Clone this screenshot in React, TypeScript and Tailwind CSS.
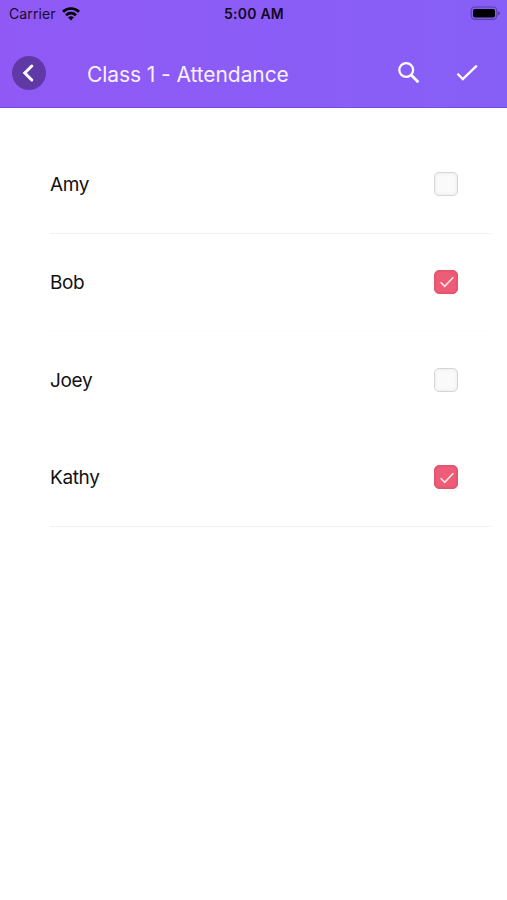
type Student = { name: string; present: boolean; line: string };

const students: Student[] = [
  { name: "Amy", present: false, line: "border-[#f3f3f3]" },
  { name: "Bob", present: true, line: "border-[#fcfcfc]" },
  { name: "Joey", present: false, line: "border-[#fdfdfd]" },
  { name: "Kathy", present: true, line: "border-[#f3f3f3]" },
];

function Label({ text, className }: { text: string; className: string }) {
  return <span className={`whitespace-nowrap ${className}`}>{text}</span>;
}

function StatusBar() {
  return (
    <div className="grid h-7 grid-cols-3 items-center pl-[7px] pr-[6px] text-black">
      <div className="flex items-center gap-[6px] pl-[2px]">
        <Label text="Carrier" className="text-[14px] leading-none tracking-[0.1px] text-[#170d2b]" />
        <svg className="h-[14px] w-[18px]" viewBox="0 0 18 14" fill="none" stroke="currentColor" strokeWidth="2.7">
          <path d="M1 4.7C5.4.4 12.6.4 17 4.7" />
          <path d="M4 8.2c2.8-2.7 7.2-2.7 10 0" />
          <path d="M6.1 10.3c1.6-1.4 4.2-1.4 5.8 0L9 13.4Z" fill="currentColor" stroke="none" />
        </svg>
      </div>
      <Label
        text="5:00 AM"
        className="text-center text-[14px] font-semibold leading-none tracking-[0.25px] text-[#12091f]"
      />
      <svg className="h-4 w-[31px] justify-self-end" viewBox="0 0 31 16">
        <rect x="1.2" y="1" width="25.6" height="12.4" rx="3.6" fill="none" stroke="#5a3fa6" strokeWidth="1.1" />
        <rect x="3" y="3" width="22" height="8.6" rx="1.8" fill="#000" />
        <path d="M28.2 5c2 .9 2 3.5 0 4.4Z" fill="#4c348c" />
      </svg>
    </div>
  );
}

function NavBar() {
  return (
    <div className="flex h-[79px] items-center pl-3 pr-7 pt-[11px] text-white">
      <button aria-label="Back" className="rounded-full bg-[#6039a7]">
        <svg className="size-[34px]" viewBox="0 0 34 34" fill="none" stroke="currentColor" strokeWidth="3">
          <path d="M19.8 10 12.8 17l7 7" strokeLinecap="round" />
        </svg>
      </button>
      <h1 className="ml-[41px] mt-[3px] flex-1 whitespace-nowrap text-[21px] font-normal leading-6 tracking-[-0.08px] text-[#f8f0ff]">
        Class 1 - Attendance
      </h1>
      <button aria-label="Search">
        <svg className="size-[24px]" viewBox="0 0 24 24" fill="none" stroke="currentColor" strokeWidth="2.2">
          <circle cx="9.2" cy="9" r="6.9" />
          <path d="m14.2 14 7.2 7.2" strokeWidth="2.8" />
        </svg>
      </button>
      <button aria-label="Save" className="ml-[34px]">
        <svg className="size-[24px]" viewBox="0 0 24 24" fill="none" stroke="currentColor" strokeWidth="2.3">
          <path d="m2.5 12.8 5.3 5.3L21.8 4.6" />
        </svg>
      </button>
    </div>
  );
}

function Checkbox({ checked }: { checked: boolean }) {
  if (!checked) {
    return (
      <span className="size-[24px] rounded-[5px] border-[1.5px] border-[#d6d6d6] bg-[#fafafa] shadow-[inset_0_0_3px_1px_#efefef]" />
    );
  }
  return (
    <span className="flex size-[24px] items-center justify-center rounded-[5px] border border-[#e0556c] bg-[#ee5c77] shadow-[inset_0_0_2px_#d94d65]">
      <svg className="size-[25px] shrink-0" viewBox="0 0 25 25" fill="none" stroke="#ffe9e8" strokeWidth="1.6">
        <path d="m6.7 13.3 4 4L19.3 8.3" />
      </svg>
    </span>
  );
}

export default function App() {
  return (
    <div className="h-[900px] w-full overflow-hidden bg-white font-['Inter','Liberation_Sans',sans-serif]">
      <header className="h-[108px] border-b border-[#7649e6] bg-linear-to-r from-[#9059f6] to-[#865ff7]">
        <StatusBar />
        <NavBar />
      </header>
      <ul className="ml-[50px] mr-[14px] mt-[27.9px]">
        {students.map((s) => (
          <li key={s.name} className={`flex h-[97.67px] items-center justify-between border-b pr-[35px] ${s.line}`}>
            <Label text={s.name} className="pt-[2px] text-[19px] leading-6 tracking-[-0.35px] text-[#111]" />
            <Checkbox checked={s.present} />
          </li>
        ))}
      </ul>
    </div>
  );
}
